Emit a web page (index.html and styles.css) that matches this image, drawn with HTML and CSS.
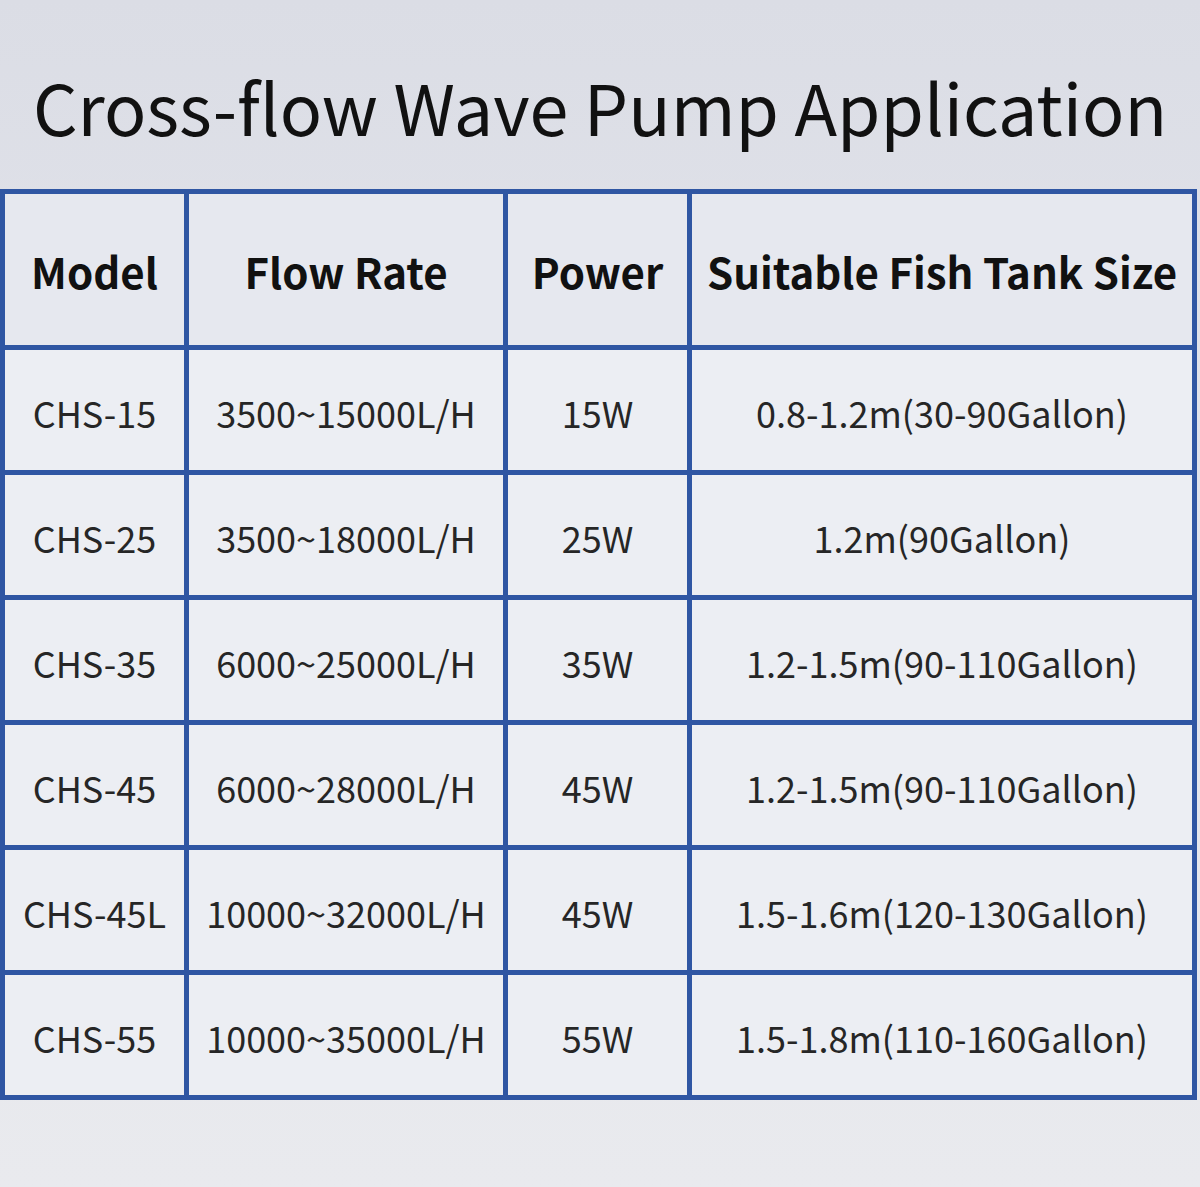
FILE: index.html
```html
<!DOCTYPE html>
<html lang="en">
<head>
<meta charset="utf-8">
<title>Cross-flow Wave Pump Application</title>
<link rel="stylesheet" href="styles.css">
</head>
<body>
<div class="page">
  <h1 class="title">Cross-flow Wave Pump Application</h1>
  <div class="grid">
    <div class="cell head">Model</div>
    <div class="cell head">Flow Rate</div>
    <div class="cell head">Power</div>
    <div class="cell head">Suitable Fish Tank Size</div>

    <div class="cell">CHS-15</div>
    <div class="cell">3500~15000L/H</div>
    <div class="cell">15W</div>
    <div class="cell">0.8-1.2m(30-90Gallon)</div>

    <div class="cell">CHS-25</div>
    <div class="cell">3500~18000L/H</div>
    <div class="cell">25W</div>
    <div class="cell">1.2m(90Gallon)</div>

    <div class="cell">CHS-35</div>
    <div class="cell">6000~25000L/H</div>
    <div class="cell">35W</div>
    <div class="cell">1.2-1.5m(90-110Gallon)</div>

    <div class="cell">CHS-45</div>
    <div class="cell">6000~28000L/H</div>
    <div class="cell">45W</div>
    <div class="cell">1.2-1.5m(90-110Gallon)</div>

    <div class="cell">CHS-45L</div>
    <div class="cell">10000~32000L/H</div>
    <div class="cell">45W</div>
    <div class="cell">1.5-1.6m(120-130Gallon)</div>

    <div class="cell">CHS-55</div>
    <div class="cell">10000~35000L/H</div>
    <div class="cell">55W</div>
    <div class="cell">1.5-1.8m(110-160Gallon)</div>
  </div>
</div>
</body>
</html>
```

FILE: styles.css
```css
html, body {
  margin: 0;
  padding: 0;
}
body {
  width: 1200px;
  height: 1187px;
  overflow: hidden;
  background: linear-gradient(180deg, #dbdde5 0%, #e2e4eb 40%, #e9eaee 100%);
  font-family: "Noto Sans CJK SC", "Noto Sans", sans-serif;
}
.page {
  display: flex;
  flex-direction: column;
  padding-top: 71px;
}
.title {
  margin: 0;
  font-size: 70px;
  line-height: 70px;
  font-weight: 400;
  color: #111;
  text-align: center;
}
.grid {
  margin-top: 48px;
  width: 1187px;
  display: grid;
  grid-template-columns: 179px 314px 179px 500px;
  grid-template-rows: 151px repeat(6, 120px);
  gap: 5px;
  padding: 5px;
  background: #2f56a3;
}
.cell {
  background: #eceef3;
  display: flex;
  align-items: center;
  justify-content: center;
  font-size: 36px;
  color: #262626;
  white-space: nowrap;
  padding-top: 4px;
  box-sizing: border-box;
}
.cell.head {
  background: #e6e8ef;
  font-size: 42px;
  font-weight: 700;
  color: #111;
  padding-top: 2px;
}
```
